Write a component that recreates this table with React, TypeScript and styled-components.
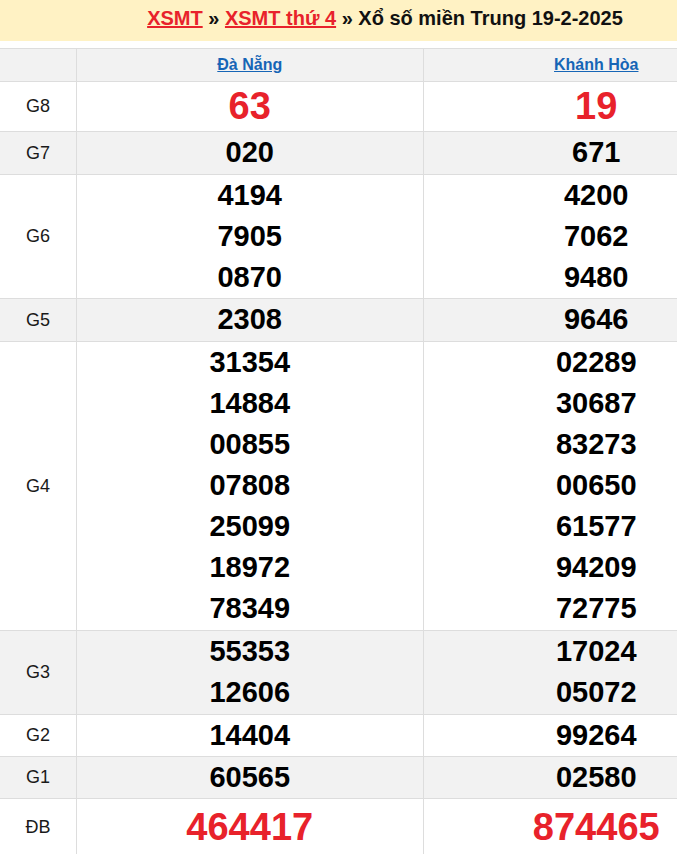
import styled, { createGlobalStyle } from "styled-components";

const GlobalStyle = createGlobalStyle`
  html, body {
    margin: 0;
    padding: 0;
    background: #fff;
    overflow: hidden;
  }
  body {
    font-family: "Liberation Sans", Arial, sans-serif;
  }
`;

type Prize = {
  label: string;
  left: string[];
  right: string[];
  big?: boolean;
  lineHeight?: number;
  pad?: number;
};

const prizes: Prize[] = [
  { label: "G8", left: ["63"], right: ["19"], big: true, lineHeight: 49 },
  { label: "G7", left: ["020"], right: ["671"], pad: 1 },
  { label: "G6", left: ["4194", "7905", "0870"], right: ["4200", "7062", "9480"] },
  { label: "G5", left: ["2308"], right: ["9646"], pad: 1 },
  {
    label: "G4",
    left: ["31354", "14884", "00855", "07808", "25099", "18972", "78349"],
    right: ["02289", "30687", "83273", "00650", "61577", "94209", "72775"],
    pad: 1,
  },
  { label: "G3", left: ["55353", "12606"], right: ["17024", "05072"], pad: 1 },
  { label: "G2", left: ["14404"], right: ["99264"] },
  { label: "G1", left: ["60565"], right: ["02580"] },
  { label: "ĐB", left: ["464417"], right: ["874465"], big: true, lineHeight: 56 },
];

export default function App() {
  return (
    <>
      <GlobalStyle />
      <Page>
        <TitleBar>
          <RedLink href="#">XSMT</RedLink> » <RedLink href="#">XSMT thứ 4</RedLink> » Xổ số
          miền Trung 19-2-2025
        </TitleBar>
        <ResultTable>
          <thead>
            <HeadRow>
              <LabelHead />
              <ProvinceHead>
                <BlueLink href="#">Đà Nẵng</BlueLink>
              </ProvinceHead>
              <ProvinceHead>
                <BlueLink href="#">Khánh Hòa</BlueLink>
              </ProvinceHead>
            </HeadRow>
          </thead>
          <tbody>
            {prizes.map((p, i) => (
              <PrizeRow key={p.label} $alt={i % 2 === 1}>
                <LabelCell>{p.label}</LabelCell>
                {[p.left, p.right].map((nums, j) => (
                  <NumCell key={j} $pad={p.pad ?? 0}>
                    {nums.map((n) => (
                      <Num key={n} $big={p.big} $lh={p.lineHeight ?? 41}>
                        {n}
                      </Num>
                    ))}
                  </NumCell>
                ))}
              </PrizeRow>
            ))}
          </tbody>
        </ResultTable>
      </Page>
    </>
  );
}

const Page = styled.div`
  width: 770px;
`;

const TitleBar = styled.h1`
  margin: 0;
  height: 41px;
  line-height: 36px;
  background: #fff2c4;
  text-align: center;
  font-size: 20px;
  font-weight: bold;
  color: #111;
`;

const RedLink = styled.a`
  color: #e8222b;
  text-decoration: underline;
`;

const ResultTable = styled.table`
  margin-top: 7px;
  width: 770px;
  border-collapse: collapse;
  table-layout: fixed;
`;

const HeadRow = styled.tr`
  background: #f2f2f2;
`;

const LabelHead = styled.th`
  width: 76px;
  height: 32px;
  padding: 0;
  border: 1px solid #dddddd;
  border-left: none;
`;

const ProvinceHead = styled.th`
  height: 32px;
  padding: 0;
  line-height: 30px;
  border: 1px solid #dddddd;
  text-align: center;
`;

const BlueLink = styled.a`
  color: #1665b6;
  font-size: 16px;
  font-weight: bold;
  text-decoration: underline;
`;

const PrizeRow = styled.tr<{ $alt: boolean }>`
  background: ${(p) => (p.$alt ? "#f2f2f2" : "#ffffff")};
`;

const LabelCell = styled.td`
  border: 1px solid #dddddd;
  border-left: none;
  text-align: center;
  font-size: 18px;
  color: #1a1a1a;
  padding: 0;
`;

const NumCell = styled.td<{ $pad: number }>`
  border: 1px solid #dddddd;
  text-align: center;
  padding: 0 0 ${(p) => p.$pad}px;
`;

const Num = styled.div<{ $big?: boolean; $lh: number }>`
  line-height: ${(p) => p.$lh}px;
  font-size: ${(p) => (p.$big ? 38 : 29)}px;
  font-weight: bold;
  color: ${(p) => (p.$big ? "#e8222b" : "#000")};
`;
